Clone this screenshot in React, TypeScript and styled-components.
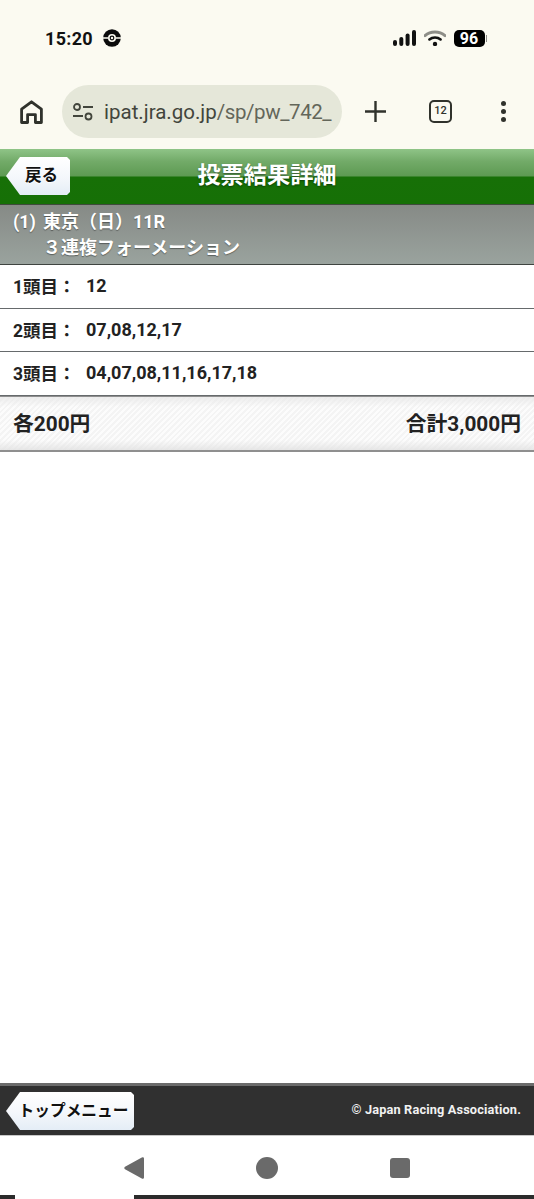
import React from "react";
import styled, { createGlobalStyle } from "styled-components";

const GlobalStyle = createGlobalStyle`
  html, body {
    margin: 0;
    padding: 0;
    background: #fff;
  }
  body {
    font-family: Roboto, "Noto Sans CJK JP", sans-serif;
  }
`;

const Screen = styled.div`
  display: flex;
  flex-direction: column;
  width: 534px;
  height: 1199px;
  overflow: hidden;
  background: #fff;
`;

const BrowserChrome = styled.div`
  height: 149px;
  flex: none;
  display: flex;
  flex-direction: column;
  background: #fbfaf1;
`;

const StatusBar = styled.div`
  height: 85px;
  flex: none;
  display: flex;
  justify-content: space-between;
  align-items: flex-start;
  padding: 27px 47px 0 45px;
  box-sizing: border-box;
`;

const StatusGroup = styled.div<{ $gap: number }>`
  display: flex;
  align-items: center;
  gap: ${(p) => p.$gap}px;
  height: 22px;
`;

const Clock = styled.span`
  font-family: Roboto, sans-serif;
  font-size: 18px;
  font-weight: 700;
  letter-spacing: 0.3px;
  color: #111;
`;

const Battery = styled.div`
  display: flex;
  align-items: center;
  gap: 1px;
`;

const BatteryBody = styled.div`
  width: 31px;
  height: 17px;
  border-radius: 5px;
  background: #000;
  color: #fff;
  font-family: Roboto, sans-serif;
  font-size: 16px;
  font-weight: 700;
  line-height: 17px;
  text-align: center;
`;

const BatteryCap = styled.div`
  width: 1.5px;
  height: 7px;
  background: #8a8a86;
`;

const Toolbar = styled.div`
  flex: none;
  height: 53px;
  display: flex;
  align-items: center;
`;

const HomeSlot = styled.div`
  width: 62px;
  display: flex;
  justify-content: center;
`;

const AddressPill = styled.div`
  width: 280px;
  height: 53px;
  flex: none;
  border-radius: 27px;
  background: #e5e7d9;
  display: flex;
  align-items: center;
  padding-left: 10px;
  box-sizing: border-box;
  gap: 10px;
  overflow: hidden;
`;

const Url = styled.div`
  font-family: Roboto, sans-serif;
  font-size: 20.5px;
  white-space: nowrap;
  letter-spacing: -0.42px;
  color: #63665a;
`;

const UrlHost = styled.span`
  letter-spacing: 0;
  color: #42453c;
`;

const ToolbarActions = styled.div`
  flex: 1;
  display: flex;
  align-items: center;
  padding-left: 23px;
`;

const TabCount = styled.div`
  width: 23px;
  height: 23px;
  margin-left: 43px;
  box-sizing: border-box;
  border: 2.4px solid #30322c;
  border-radius: 5px;
  color: #30322c;
  font-family: Roboto, sans-serif;
  font-size: 11px;
  font-weight: 500;
  line-height: 18px;
  text-align: center;
`;

const MenuDots = styled.div`
  margin-left: 49px;
  display: flex;
  flex-direction: column;
  gap: 3px;
`;

const Dot = styled.div`
  width: 5px;
  height: 5px;
  border-radius: 50%;
  background: #30322c;
`;

const PageHeader = styled.header`
  flex: none;
  height: 56px;
  box-sizing: border-box;
  display: flex;
  align-items: center;
  position: relative;
  justify-content: center;
  padding-bottom: 7px;
  border-bottom: 1px solid #3f4a3c;
  background: linear-gradient(
    to bottom,
    #8fc487 0,
    #73ab69 12px,
    #5d9a52 27px,
    #177007 28px,
    #167006 100%
  );
`;

const PageTitle = styled.h1`
  margin: 0;
  color: #fff;
  font-size: 23.2px;
  font-weight: 700;
  text-shadow: 0 1px 2px rgba(0, 0, 0, 0.45);
`;

const BackButton = styled.button<{ $width: number; $top: number }>`
  position: absolute;
  left: 6px;
  top: ${(p) => p.$top}px;
  width: ${(p) => p.$width}px;
  height: 38px;
  border: none;
  padding: 0 0 4px 7px;
  color: #111;
  font-family: inherit;
  font-weight: 700;
  white-space: nowrap;
  background: linear-gradient(to bottom, #ffffff, #f4f7fb 55%, #e4edf6);
  clip-path: polygon(
    14px 0,
    calc(100% - 3px) 0,
    100% 3px,
    100% calc(100% - 3px),
    calc(100% - 3px) 100%,
    14px 100%,
    0 50%
  );
`;

const BackLabel = styled.span<{ $size: number }>`
  font-size: ${(p) => p.$size}px;
  text-shadow: 0 1px 1px rgba(255, 255, 255, 0.9);
`;

const RaceInfo = styled.section`
  flex: none;
  height: 60px;
  box-sizing: border-box;
  padding: 4px 13px 0;
  border-bottom: 1px solid #3f4440;
  background: linear-gradient(to bottom, #868a86, #9aa39e);
  color: #fff;
  font-size: 18px;
  font-weight: 700;
  line-height: 26px;
  text-shadow: 0 1px 1px rgba(0, 0, 0, 0.4);
`;

const RaceLine = styled.div<{ $indent?: number }>`
  padding-left: ${(p) => p.$indent ?? 0}px;
  white-space: nowrap;
  word-spacing: 2.5px;
`;

const SelectionRow = styled.div<{ $height: number }>`
  flex: none;
  height: ${(p) => p.$height}px;
  box-sizing: border-box;
  display: flex;
  align-items: center;
  padding: 0 0 2px 13px;
  border-bottom: 1px solid #666a6c;
  background: #fff;
  color: #222;
  font-size: 18px;
  font-weight: 700;
`;

const RowLabel = styled.span`
  width: 73px;
  flex: none;
  white-space: nowrap;
  font-size: 17.5px;
`;

const TotalBar = styled.div`
  flex: none;
  height: 56px;
  box-sizing: border-box;
  display: flex;
  align-items: center;
  justify-content: space-between;
  padding: 0 13px 4px;
  border-top: 1px solid #8f8f8f;
  border-bottom: 2px solid #8f8f8f;
  color: #222;
  font-size: 20.8px;
  font-weight: 700;
  background:
    linear-gradient(to bottom, rgba(232, 232, 232, 0.8), rgba(255, 255, 255, 0) 10px),
    linear-gradient(to top, rgba(225, 225, 225, 0.8), rgba(255, 255, 255, 0) 10px),
    repeating-linear-gradient(135deg, #fcfcfc 0 2px, #f4f4f4 2px 4px);
`;

const Spacer = styled.main`
  flex: 1;
  background: #fff;
`;

const Footer = styled.footer`
  flex: none;
  height: 53px;
  box-sizing: border-box;
  position: relative;
  display: flex;
  align-items: center;
  justify-content: flex-end;
  padding: 0 13px 2px 0;
  border-top: 3px solid #6b6b6b;
  border-bottom: 1px solid #c8c8c8;
  background: #303030;
`;

const Copyright = styled.span`
  color: #f2f2f2;
  font-size: 12.75px;
  font-weight: 700;
  letter-spacing: 0.15px;
`;

const NavBar = styled.nav`
  flex: none;
  height: 59px;
  display: flex;
  align-items: center;
  justify-content: center;
  gap: 112px;
  padding-top: 5px;
  box-sizing: border-box;
  background: #fff;
`;

const NavCircle = styled.div`
  width: 22px;
  height: 22px;
  border-radius: 50%;
  background: #6a6a6a;
`;

const NavSquare = styled.div`
  width: 20px;
  height: 20px;
  border-radius: 3px;
  background: #6a6a6a;
`;

const GestureStrip = styled.div`
  flex: none;
  height: 4px;
  display: flex;
  background: #2b2b2b;
`;

const GestureGap = styled.div`
  width: 119px;
  margin-left: 15px;
  background: #fff;
`;

export default function App() {
  return (
    <Screen>
      <GlobalStyle />
      <BrowserChrome>
        <StatusBar>
          <StatusGroup $gap={10}>
            <Clock>15:20</Clock>
            <svg width="18" height="18" viewBox="0 0 18 18">
              <circle cx="9" cy="9" r="8.8" fill="#0b0b0b" />
              <path d="M0 9h5M13 9h5" stroke="#fbfaf1" strokeWidth="1.3" />
              <circle cx="9" cy="9" r="4" fill="#fbfaf1" />
              <circle cx="9" cy="9" r="2.4" fill="#0b0b0b" />
              <circle cx="9" cy="9" r="1.2" fill="#fbfaf1" />
            </svg>
          </StatusGroup>
          <StatusGroup $gap={8}>
            <svg width="23" height="16" viewBox="0 0 23 16">
              <rect x="0" y="10" width="4" height="6" rx="2" fill="#111" />
              <rect x="6.3" y="7" width="4" height="9" rx="2" fill="#111" />
              <rect x="12.6" y="3.5" width="4" height="12.5" rx="2" fill="#111" />
              <rect x="19" y="0" width="4" height="16" rx="2" fill="#111" />
            </svg>
            <svg width="22" height="16" viewBox="0 0 22 16">
              <path d="M1 5.6C6.6 0.8 15.4 0.8 21 5.6" fill="none" stroke="#8e8e88" strokeWidth="3" strokeLinecap="round" />
              <path d="M5.4 9.4C8.6 6.8 13.4 6.8 16.6 9.4" fill="none" stroke="#111" strokeWidth="2.6" strokeLinecap="round" />
              <circle cx="11" cy="14" r="2.2" fill="#111" />
            </svg>
            <Battery>
              <BatteryBody>96</BatteryBody>
              <BatteryCap />
            </Battery>
          </StatusGroup>
        </StatusBar>
        <Toolbar>
          <HomeSlot>
            <svg width="23" height="24" viewBox="0 0 23 24" fill="none" stroke="#30322c" strokeWidth="2.8" strokeLinejoin="round">
              <path d="M1.6 22.5V9.2L11.5 1.8l9.9 7.4v13.3h-6V14.6h-7.8v7.9z" />
            </svg>
          </HomeSlot>
          <AddressPill>
            <svg width="22" height="20" viewBox="0 0 22 20" fill="none" stroke="#42453c" strokeWidth="1.8">
              <circle cx="5" cy="5" r="3" />
              <path d="M11 5h10M1 14h10" />
              <circle cx="16.5" cy="14.5" r="3" />
            </svg>
            <Url>
              <UrlHost>ipat.jra.go.jp</UrlHost>/sp/pw_742_
            </Url>
          </AddressPill>
          <ToolbarActions>
            <svg width="21" height="21" viewBox="0 0 21 21" stroke="#30322c" strokeWidth="2.4">
              <path d="M10.5 0v21M0 10.5h21" />
            </svg>
            <TabCount>12</TabCount>
            <MenuDots>
              <Dot />
              <Dot />
              <Dot />
            </MenuDots>
          </ToolbarActions>
        </Toolbar>
      </BrowserChrome>

      <PageHeader>
        <BackButton $width={64} $top={8}>
          <BackLabel $size={16.5}>戻る</BackLabel>
        </BackButton>
        <PageTitle>投票結果詳細</PageTitle>
      </PageHeader>

      <RaceInfo>
        <RaceLine>(1) 東京（日）11R</RaceLine>
        <RaceLine $indent={30}>３連複フォーメーション</RaceLine>
      </RaceInfo>

      <SelectionRow $height={44}>
        <RowLabel>1頭目：</RowLabel>
        <span>12</span>
      </SelectionRow>
      <SelectionRow $height={43}>
        <RowLabel>2頭目：</RowLabel>
        <span>07,08,12,17</span>
      </SelectionRow>
      <SelectionRow $height={44}>
        <RowLabel>3頭目：</RowLabel>
        <span>04,07,08,11,16,17,18</span>
      </SelectionRow>

      <TotalBar>
        <span>各200円</span>
        <span>合計3,000円</span>
      </TotalBar>

      <Spacer />

      <Footer>
        <BackButton $width={128} $top={6}>
          <BackLabel $size={15.7}>トップメニュー</BackLabel>
        </BackButton>
        <Copyright>© Japan Racing Association.</Copyright>
      </Footer>

      <NavBar>
        <svg width="20" height="22" viewBox="0 0 20 22">
          <path d="M20 1.5v19a1.4 1.4 0 0 1-2.2 1.1L1 12.2a1.4 1.4 0 0 1 0-2.4L17.8.4A1.4 1.4 0 0 1 20 1.5z" fill="#6a6a6a" />
        </svg>
        <NavCircle />
        <NavSquare />
      </NavBar>
      <GestureStrip>
        <GestureGap />
      </GestureStrip>
    </Screen>
  );
}
